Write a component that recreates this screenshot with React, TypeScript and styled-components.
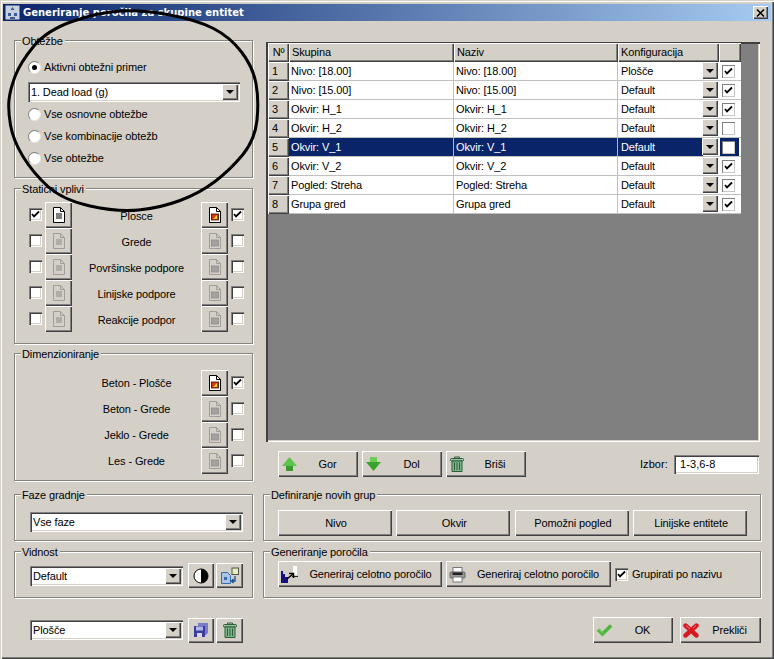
import { Fragment } from "react";
import styled, { createGlobalStyle } from "styled-components";

const GlobalStyle = createGlobalStyle`
html, body {
  margin: 0;
  background: #d4d0c8;
}
#root {
  width: 774px;
  height: 659px;
  overflow: hidden;
}
`;

const raised = `
background: #d4d0c8;
box-shadow: inset 1px 1px 0 #ffffff, inset -1px -1px 0 #404040, inset -2px -2px 0 #808080;
`;

const sunken = `
background: #ffffff;
box-shadow: inset 1px 1px 0 #808080, inset 2px 2px 0 #404040, inset -1px -1px 0 #ffffff, inset -2px -2px 0 #d4d0c8;
`;

const Window = styled.div`
position: relative;
box-sizing: border-box;
width: 774px;
height: 659px;
padding: 4px 3px;
background: #d4d0c8;
color: #000000;
font-family: "Liberation Sans", Arial, sans-serif;
font-size: 11px;
letter-spacing: -0.12px;
box-shadow: inset 1px 1px 0 #d4d0c8, inset 2px 2px 0 #ffffff, inset -1px -1px 0 #404040, inset -2px -2px 0 #808080;
`;

const TitleBar = styled.div`
display: flex;
align-items: center;
height: 17px;
padding: 0 3px 0 2px;
background: linear-gradient(90deg, #0a246a 0%, #a6caf0 100%);
`;

const TitleText = styled.div`
flex: 1;
margin-left: 3px;
color: #ffffff;
font-family: "DejaVu Sans", sans-serif;
font-size: 10px;
font-weight: 700;
letter-spacing: 0;
`;

const CloseBtn = styled.div`
${raised}
display: flex;
align-items: center;
justify-content: center;
width: 15px;
height: 13px;
`;

const Body = styled.div`
display: grid;
grid-template-columns: 239px 498px;
column-gap: 10px;
padding: 19px 0 0 11px;
`;

const Column = styled.div`
display: flex;
flex-direction: column;
`;

const Group = styled.div<{ $h: number; $mt?: number }>`
position: relative;
box-sizing: border-box;
height: ${(p) => p.$h}px;
margin-top: ${(p) => p.$mt || 0}px;
border: 1px solid #85847f;
box-shadow: inset 1px 1px 0 #ffffff, 1px 1px 0 #ffffff;
`;

const Legend = styled.div`
position: absolute;
top: -6px;
left: 6px;
padding: 0 2px 0 1px;
background: #d4d0c8;
line-height: 13px;
`;

const LoadsBody = styled.div`
display: flex;
flex-direction: column;
padding: 15px 12px 0 13px;
`;

const RadioRow = styled.div<{ $mt?: number }>`
display: flex;
align-items: center;
gap: 3px;
height: 22px;
margin-top: ${(p) => p.$mt || 0}px;
`;

const RadioCircle = styled.div<{ $on?: boolean }>`
box-sizing: border-box;
display: flex;
align-items: center;
justify-content: center;
width: 13px;
height: 13px;
border-radius: 50%;
background: #ffffff;
border: 1px solid;
border-color: #808080 #e8e6e0 #e8e6e0 #808080;
&::after {
  content: "";
  display: ${(p) => (p.$on ? "block" : "none")};
  width: 5px;
  height: 5px;
  border-radius: 50%;
  background: #000000;
}
`;

const Combo = styled.div<{ $w?: number; $mt?: number }>`
${sunken}
box-sizing: border-box;
display: flex;
align-items: center;
justify-content: space-between;
width: ${(p) => (p.$w ? `${p.$w}px` : "auto")};
height: 20px;
margin-top: ${(p) => p.$mt || 0}px;
padding: 0 2px 0 3px;
`;

const DropBtn = styled.div`
${raised}
flex: none;
display: flex;
align-items: center;
justify-content: center;
width: 16px;
height: 16px;
&::after {
  content: "";
  border: 4px solid transparent;
  border-top: 4px solid #000000;
  border-bottom: none;
}
`;

const EffectRows = styled.div<{ $top: number }>`
display: flex;
flex-direction: column;
padding: ${(p) => p.$top}px 8px 0 14px;
`;

const EffectRow = styled.div`
display: grid;
grid-template-columns: 13px 27px 1fr 27px 13px;
column-gap: 3px;
align-items: center;
height: 26px;
`;

const EffectLabel = styled.div<{ $low?: boolean }>`
padding-top: ${(p) => (p.$low ? 2 : 0)}px;
text-align: center;
`;

const CheckBox = styled.div<{ $hidden?: boolean; $flat?: boolean; $lift?: boolean }>`
${sunken}
box-sizing: border-box;
display: flex;
align-items: center;
justify-content: center;
width: 13px;
height: 13px;
margin-bottom: ${(p) => (p.$lift ? 2 : 0)}px;
visibility: ${(p) => (p.$hidden ? "hidden" : "visible")};
box-shadow: ${(p) =>
  p.$flat
    ? "inset 1px 1px 0 #808080, inset -1px -1px 0 #c8c8c8"
    : "inset 1px 1px 0 #808080, inset 2px 2px 0 #404040, inset -1px -1px 0 #ffffff, inset -2px -2px 0 #d4d0c8"};
`;

const IconBtn = styled.div<{ $w?: number; $h?: number; $hidden?: boolean }>`
${raised}
display: flex;
align-items: center;
justify-content: center;
width: ${(p) => p.$w || 27}px;
height: ${(p) => p.$h || 26}px;
visibility: ${(p) => (p.$hidden ? "hidden" : "visible")};
`;

const IconPair = styled.div`
display: flex;
gap: 2px;
`;

const ComboPad = styled.div`
padding: 17px 9px 0 15px;
`;

const InlineRow = styled.div`
display: flex;
align-items: center;
gap: 5px;
padding: 11px 0 0 15px;
`;

const TableFrame = styled.div`
box-sizing: border-box;
width: 494px;
height: 400px;
margin: 2px 0 0 3px;
padding: 1px 0 0 2px;
background: #808080;
box-shadow: inset 1px 1px 0 #404040, inset 2px 2px 0 #404040, inset -1px -1px 0 #ffffff, inset -2px -2px 0 #d4d0c8;
`;

const TableGrid = styled.div`
display: grid;
grid-template-columns: 21px 165px 164px 101px 22px;
width: 473px;
`;

const HeadCell = styled.div<{ $center?: boolean }>`
${raised}
box-sizing: border-box;
height: 19px;
padding: 0 3px;
line-height: 18px;
text-align: ${(p) => (p.$center ? "center" : "left")};
`;

const NumCell = styled.div`
${raised}
box-sizing: border-box;
height: 19px;
padding-left: 4px;
line-height: 18px;
`;

const Cell = styled.div<{ $sel?: boolean }>`
box-sizing: border-box;
height: 19px;
padding-left: 2px;
line-height: 18px;
color: ${(p) => (p.$sel ? "#ffffff" : "#000000")};
background: ${(p) => (p.$sel ? "#0a246a" : "#ffffff")};
border-right: 1px solid ${(p) => (p.$sel ? "#a6b6dc" : "#c0c0c0")};
border-bottom: 1px solid #c0c0c0;
`;

const ConfigCell = styled(Cell)`
display: flex;
justify-content: space-between;
padding: 0 1px 0 3px;
border-right: none;
background: ${(p) =>
  p.$sel ? "linear-gradient(90deg, #0a246a 85px, #ffffff 85px)" : "#ffffff"};
`;

const ConfigDrop = styled(DropBtn)`
height: 17px;
`;

const CheckCell = styled(Cell)`
display: flex;
align-items: center;
justify-content: center;
padding: 0 3px 0 0;
border-right: none;
background: ${(p) =>
  p.$sel ? "linear-gradient(90deg, #ffffff 1px, #0a246a 1px, #0a246a 20px, #ffffff 20px)" : "#ffffff"};
`;

const Toolbar = styled.div`
display: flex;
align-items: center;
gap: 4px;
height: 26px;
margin-top: 9px;
padding-left: 15px;
`;

const Selection = styled.div`
display: flex;
align-items: center;
gap: 6px;
margin: 0 2px 0 auto;
letter-spacing: 0.1px;
`;

const SelectionInput = styled.div`
${sunken}
box-sizing: border-box;
width: 85px;
height: 19px;
padding-left: 6px;
line-height: 19px;
`;

const TextBtn = styled.div<{ $w: number }>`
${raised}
box-sizing: border-box;
display: flex;
align-items: center;
flex: none;
width: ${(p) => p.$w}px;
height: 26px;
padding: 0 1px 0 3px;
`;

const BtnLabel = styled.div`
flex: 1;
text-align: center;
white-space: nowrap;
`;

const BtnRow = styled.div`
display: flex;
gap: 4.4px;
padding: 15px 0 0 14px;
`;

const ReportRow = styled.div`
display: flex;
align-items: center;
gap: 4px;
padding: 9px 0 0 14px;
`;

const GroupCheck = styled.div`
display: flex;
align-items: center;
gap: 4px;
`;

const Footer = styled.div`
display: flex;
align-items: center;
justify-content: space-between;
margin: 19px 0 0 11px;
padding-left: 16px;
width: 731px;
`;

const FooterGroup = styled.div`
display: flex;
align-items: center;
gap: 5px;
`;

const FooterActions = styled(FooterGroup)`
gap: 7px;
`;

const Scribble = styled.svg`
position: absolute;
top: 0;
left: 0;
pointer-events: none;
`;

const Tick = () => (
  <svg width="9" height="9" viewBox="0 0 9 9">
    <path d="M1 4l2 2.5L8 1.5" fill="none" stroke="#000" strokeWidth="1.8" />
  </svg>
);

const Check = ({
  on,
  hidden,
  flat,
  lift,
}: {
  on?: boolean;
  hidden?: boolean;
  flat?: boolean;
  lift?: boolean;
}) => (
  <CheckBox $hidden={hidden} $flat={flat} $lift={lift}>
    {on && <Tick />}
  </CheckBox>
);

const Radio = ({ on, label, mt }: { on?: boolean; label: string; mt?: number }) => (
  <RadioRow $mt={mt}>
    <RadioCircle $on={on} />
    {label}
  </RadioRow>
);

const TextDoc = ({ off }: { off?: boolean }) => (
  <svg width="14" height="18" viewBox="0 0 14 18">
    <path d="M1.5 1.5h7l4 4v11h-11z" fill={off ? "#d4d0c8" : "#fff"} stroke={off ? "#a09e98" : "#000"} />
    <path d="M8.5 1.5v4h4" fill="none" stroke={off ? "#a09e98" : "#000"} />
    <path d="M4 8h6M4 10h6M4 12h6" stroke={off ? "#8c8a86" : "#000"} strokeWidth="1.2" />
  </svg>
);

const ChartDoc = ({ off }: { off?: boolean }) => (
  <svg width="14" height="18" viewBox="0 0 14 18">
    <path d="M1.5 1.5h7l4 4v11h-11z" fill={off ? "#d4d0c8" : "#fff"} stroke={off ? "#a09e98" : "#000"} />
    <path d="M8.5 1.5v4h4" fill="none" stroke={off ? "#a09e98" : "#000"} />
    <rect x="3.5" y="8" width="7" height="6" fill={off ? "#a4a29e" : "#e03010"} stroke={off ? "#8c8a86" : "#301000"} strokeWidth="0.8" />
    {!off && <path d="M5 13l4-4v4z" fill="#f8d020" />}
  </svg>
);

const ArrowUp = () => (
  <svg width="17" height="16" viewBox="0 0 17 16">
    <path d="M5 9h7v6H5z" fill="#3a9a30" />
    <path d="M8.500 1L16 10H1z" fill="#5cc44c" />
  </svg>
);

const ArrowDown = () => (
  <svg width="17" height="16" viewBox="0 0 17 16">
    <path d="M5 1h7v6H5z" fill="#6ccc58" />
    <path d="M8.500 15L1 6h15z" fill="#38a42e" />
  </svg>
);

const Trash = () => (
  <svg width="16" height="17" viewBox="0 0 16 17">
    <path d="M5.500 2.500V1h5v1.500" fill="none" stroke="#2d5a38" />
    <rect x="1.500" y="2.500" width="13" height="2.500" rx="1" fill="#9cc4a4" stroke="#2d5a38" />
    <path d="M3 5h10v10.500H3z" fill="#7db88a" stroke="#2d5a38" />
    <path d="M5.500 6.500v7.500M8 6.500v7.500M10.500 6.500v7.500" stroke="#2d5a38" />
  </svg>
);

const ReportTree = () => (
  <svg width="19" height="19" viewBox="0 0 19 19">
    <rect x="12" y="1" width="4" height="9" fill="#fff" />
    <path d="M11 11.500h6" stroke="#222" />
    <path d="M0 6h2v3h2v3h3v6H0z" fill="#16107a" />
    <path d="M6 14l6-5M8 8.500h4.500V13" fill="none" stroke="#000" strokeWidth="1.500" />
  </svg>
);

const Printer = () => (
  <svg width="17" height="17" viewBox="0 0 17 17">
    <rect x="4" y="1.500" width="9" height="5" fill="#fff" stroke="#777" />
    <rect x="1" y="6" width="15" height="6" rx="1" fill="#9a9a9a" stroke="#666" />
    <rect x="3.500" y="6.500" width="10" height="2.500" fill="#202020" />
    <rect x="4" y="11" width="9" height="5" fill="#fff" stroke="#777" />
  </svg>
);

const Contrast = () => (
  <svg width="16" height="16" viewBox="0 0 16 16">
    <circle cx="8" cy="8" r="7" fill="#fff" stroke="#000" />
    <path d="M8 1a7 7 0 0 1 0 14z" fill="#000" />
  </svg>
);

const Swap = () => (
  <svg width="20" height="18" viewBox="0 0 20 18">
    <rect x="12" y="1" width="6.500" height="6.500" fill="#e4f0b8" stroke="#555" />
    <path d="M1.500 5.500h6l3 3v8h-9z" fill="#a8c4e8" stroke="#3a6aa8" />
    <path d="M4 10h3v3H4z" fill="#3a6aa8" />
    <path d="M15 9v5h-3M13.500 12l-2 2 2 2" fill="none" stroke="#1a4a90" strokeWidth="1.300" />
  </svg>
);

const Floppy = () => (
  <svg width="16" height="16" viewBox="0 0 16 16">
    <path d="M5 1h10v10l-2 2H5z" fill="#7a7cc8" />
    <path d="M1 4h11v11H1z" fill="#3c3ca0" />
    <path d="M3 4.500h7v4H3z" fill="#b4b8e8" />
    <path d="M4 11h5v4H4z" fill="#d8d8e8" />
  </svg>
);

const OkMark = () => (
  <svg width="17" height="14" viewBox="0 0 17 14">
    <path d="M2 6.500l4.500 4.500L15 2.500" fill="none" stroke="#4cb83c" strokeWidth="3.600" />
    <path d="M2.500 5.800l4 4" fill="none" stroke="#9ae08c" strokeWidth="1" />
  </svg>
);

const CancelMark = () => (
  <svg width="16" height="15" viewBox="0 0 16 15">
    <path d="M2.500 2.500l11 10M13.500 2.500l-11 10" fill="none" stroke="#d81820" strokeWidth="4.400" strokeLinecap="round" />
    <path d="M3 2.500l4 3.500M13 2.500l-3 2.800" fill="none" stroke="#f08088" strokeWidth="1" />
  </svg>
);

const AppIcon = () => (
  <svg width="15" height="15" viewBox="0 0 15 15">
    <rect x="0.500" y="0.500" width="14" height="14" fill="#c8d0e0" />
    <path d="M7.500 2l2 3h-4zM3 8h3v3H3zM9 8h3v3H9zM5 12h5v2H5z" fill="#3a5a98" />
  </svg>
);

const staticEffects = [
  { label: "Plosce", on: true },
  { label: "Grede", on: false },
  { label: "Površinske podpore", on: false },
  { label: "Linijske podpore", on: false },
  { label: "Reakcije podpor", on: false },
];

const designEffects = [
  { label: "Beton - Plošče", on: true },
  { label: "Beton - Grede", on: false },
  { label: "Jeklo - Grede", on: false },
  { label: "Les - Grede", on: false },
];

const rows = [
  { group: "Nivo: [18.00]", config: "Plošče", on: true },
  { group: "Nivo: [15.00]", config: "Default", on: true },
  { group: "Okvir: H_1", config: "Default", on: true },
  { group: "Okvir: H_2", config: "Default", on: false },
  { group: "Okvir: V_1", config: "Default", on: false, sel: true },
  { group: "Okvir: V_2", config: "Default", on: true },
  { group: "Pogled: Streha", config: "Default", on: true },
  { group: "Grupa gred", config: "Default", on: true },
];

// the hand drawn ring that lies over the loads group
const ringPoints = [
  [143, 10], [197, 20], [230, 37], [253, 67], [259, 100], [255, 140],
  [230, 170], [200, 193], [160, 208], [117, 212], [63, 200], [33, 173],
  [13, 140], [8, 110], [10, 90], [20, 63], [47, 30], [100, 12],
];

const ringPath = () => {
  const mid = (a: number[], b: number[]) => `${(a[0] + b[0]) / 2} ${(a[1] + b[1]) / 2}`;
  const n = ringPoints.length;
  let d = `M${mid(ringPoints[n - 1], ringPoints[0])}`;
  ringPoints.forEach((p, i) => {
    d += `Q${p[0]} ${p[1]} ${mid(p, ringPoints[(i + 1) % n])}`;
  });
  return d + "Z";
};

export default function App() {
  return (
    <Window>
      <GlobalStyle />
      <TitleBar>
        <AppIcon />
        <TitleText>Generiranje poročila za skupine entitet</TitleText>
        <CloseBtn>
          <svg width="9" height="8" viewBox="0 0 9 8">
            <path d="M1 0.500l7 7M8 0.500l-7 7" stroke="#000" strokeWidth="1.500" />
          </svg>
        </CloseBtn>
      </TitleBar>

      <Body>
        <Column>
          <Group $h={138}>
            <Legend>Obtežbe</Legend>
            <LoadsBody>
              <Radio on label="Aktivni obtežni primer" />
              <Combo $mt={4}>
                1. Dead load (g)
                <DropBtn />
              </Combo>
              <Radio mt={1} label="Vse osnovne obtežbe" />
              <Radio label="Vse kombinacije obtežb" />
              <Radio label="Vse obtežbe" />
            </LoadsBody>
          </Group>

          <Group $h={156} $mt={10}>
            <Legend>Statični vplivi</Legend>
            <EffectRows $top={13}>
              {staticEffects.map((e) => (
                <EffectRow key={e.label}>
                  <Check on={e.on} lift />
                  <IconBtn>
                    <TextDoc off={!e.on} />
                  </IconBtn>
                  <EffectLabel $low>{e.label}</EffectLabel>
                  <IconBtn>
                    <ChartDoc off={!e.on} />
                  </IconBtn>
                  <Check on={e.on} lift />
                </EffectRow>
              ))}
            </EffectRows>
          </Group>

          <Group $h={128} $mt={9}>
            <Legend>Dimenzioniranje</Legend>
            <EffectRows $top={16}>
              {designEffects.map((e) => (
                <EffectRow key={e.label}>
                  <Check hidden />
                  <IconBtn $hidden />
                  <EffectLabel>{e.label}</EffectLabel>
                  <IconBtn>
                    <ChartDoc off={!e.on} />
                  </IconBtn>
                  <Check on={e.on} lift />
                </EffectRow>
              ))}
            </EffectRows>
          </Group>

          <Group $h={47} $mt={13}>
            <Legend>Faze gradnje</Legend>
            <ComboPad>
              <Combo>
                Vse faze
                <DropBtn />
              </Combo>
            </ComboPad>
          </Group>

          <Group $h={47} $mt={10}>
            <Legend>Vidnost</Legend>
            <InlineRow>
              <Combo $w={153}>
                Default
                <DropBtn />
              </Combo>
              <IconPair>
                <IconBtn $w={26} $h={25}>
                  <Contrast />
                </IconBtn>
                <IconBtn $h={25}>
                  <Swap />
                </IconBtn>
              </IconPair>
            </InlineRow>
          </Group>
        </Column>

        <Column>
          <TableFrame>
            <TableGrid>
              <HeadCell $center>Nº</HeadCell>
              <HeadCell>Skupina</HeadCell>
              <HeadCell>Naziv</HeadCell>
              <HeadCell>Konfiguracija</HeadCell>
              <HeadCell />
              {rows.map((r, i) => (
                <Fragment key={i}>
                  <NumCell>{i + 1}</NumCell>
                  <Cell $sel={r.sel}>{r.group}</Cell>
                  <Cell $sel={r.sel}>{r.group}</Cell>
                  <ConfigCell $sel={r.sel}>
                    {r.config}
                    <ConfigDrop />
                  </ConfigCell>
                  <CheckCell $sel={r.sel}>
                    <Check on={r.on} flat />
                  </CheckCell>
                </Fragment>
              ))}
            </TableGrid>
          </TableFrame>

          <Toolbar>
            <TextBtn $w={80}>
              <ArrowUp />
              <BtnLabel>Gor</BtnLabel>
            </TextBtn>
            <TextBtn $w={80}>
              <ArrowDown />
              <BtnLabel>Dol</BtnLabel>
            </TextBtn>
            <TextBtn $w={80}>
              <Trash />
              <BtnLabel>Briši</BtnLabel>
            </TextBtn>
            <Selection>
              Izbor:
              <SelectionInput>1-3,6-8</SelectionInput>
            </Selection>
          </Toolbar>

          <Group $h={47} $mt={17}>
            <Legend>Definiranje novih grup</Legend>
            <BtnRow>
              <TextBtn $w={114}>
                <BtnLabel>Nivo</BtnLabel>
              </TextBtn>
              <TextBtn $w={114}>
                <BtnLabel>Okvir</BtnLabel>
              </TextBtn>
              <TextBtn $w={114}>
                <BtnLabel>Pomožni pogled</BtnLabel>
              </TextBtn>
              <TextBtn $w={114}>
                <BtnLabel>Linijske entitete</BtnLabel>
              </TextBtn>
            </BtnRow>
          </Group>

          <Group $h={47} $mt={10}>
            <Legend>Generiranje poročila</Legend>
            <ReportRow>
              <TextBtn $w={164}>
                <ReportTree />
                <BtnLabel>Generiraj celotno poročilo</BtnLabel>
              </TextBtn>
              <TextBtn $w={165}>
                <Printer />
                <BtnLabel>Generiraj celotno poročilo</BtnLabel>
              </TextBtn>
              <GroupCheck>
                <Check on />
                Grupirati po nazivu
              </GroupCheck>
            </ReportRow>
          </Group>
        </Column>
      </Body>

      <Footer>
        <FooterGroup>
          <Combo $w={153}>
            Plošče
            <DropBtn />
          </Combo>
          <IconPair>
            <IconBtn $w={26} $h={25}>
              <Floppy />
            </IconBtn>
            <IconBtn $h={25}>
              <Trash />
            </IconBtn>
          </IconPair>
        </FooterGroup>
        <FooterActions>
          <TextBtn $w={80}>
            <OkMark />
            <BtnLabel>OK</BtnLabel>
          </TextBtn>
          <TextBtn $w={81}>
            <CancelMark />
            <BtnLabel>Prekliči</BtnLabel>
          </TextBtn>
        </FooterActions>
      </Footer>

      <Scribble width="774" height="659" viewBox="0 0 774 659">
        <path d={ringPath()} fill="none" stroke="#000" strokeWidth="3" />
      </Scribble>
    </Window>
  );
}
